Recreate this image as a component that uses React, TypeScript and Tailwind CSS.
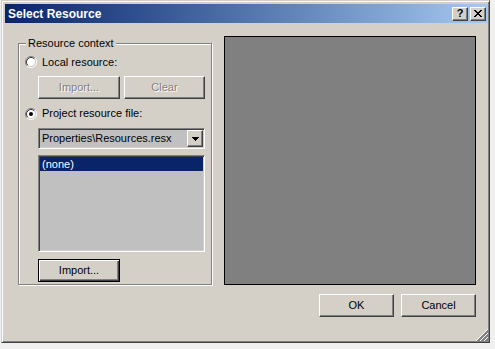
import React from "react";

const raised =
  "bg-[#d4d0c8] border border-t-white border-l-white border-r-[#404040] border-b-[#404040] shadow-[inset_-1px_-1px_#808080]";
const sunken =
  "border border-t-[#808080] border-l-[#808080] border-r-white border-b-white shadow-[inset_1px_1px_#404040,inset_-1px_-1px_#d4d0c8]";

function Radio({ checked }: { checked?: boolean }) {
  return (
    <svg width="12" height="12" viewBox="0 0 12 12" className="shrink-0">
      <circle cx="6" cy="6" r="4.2" fill="#fff" />
      <path d="M2.11 9.89 A5.5 5.5 0 0 1 9.89 2.11" fill="none" stroke="#808080" strokeWidth="1" />
      <path d="M9.89 2.11 A5.5 5.5 0 0 1 2.11 9.89" fill="none" stroke="#fff" strokeWidth="1" />
      <path d="M2.82 9.18 A4.5 4.5 0 0 1 9.18 2.82" fill="none" stroke="#404040" strokeWidth="1" />
      <path d="M9.18 2.82 A4.5 4.5 0 0 1 2.82 9.18" fill="none" stroke="#d4d0c8" strokeWidth="1" />
      {checked && <circle cx="6" cy="6" r="2" fill="#000" />}
    </svg>
  );
}

function Btn({
  children,
  className = "",
  disabled,
  isDefault,
}: {
  children: React.ReactNode;
  className?: string;
  disabled?: boolean;
  isDefault?: boolean;
}) {
  const cls = isDefault
    ? "bg-[#d4d0c8] border border-black shadow-[inset_1px_1px_#fff,inset_-1px_-1px_#404040,inset_-2px_-2px_#808080]"
    : raised;
  return (
    <div className={`${cls} h-[23px] flex items-center justify-center ${className}`}>
      <span className={disabled ? "text-[#808080] [text-shadow:1px_1px_0_#fff]" : "text-black"}>{children}</span>
    </div>
  );
}

export default function App() {
  return (
    <div className="w-[495px] h-[349px] bg-[#f0f0f0] pl-px font-['Liberation_Sans',Arial,sans-serif] text-[11px] leading-[13px] text-black">
      <div className="w-[489px] h-[343px] bg-[#d4d0c8] border border-t-[#d4d0c8] border-l-[#d4d0c8] border-r-[#404040] border-b-[#404040] shadow-[inset_1px_1px_#fff,inset_-1px_-1px_#808080] pt-[3px] pl-[3px] pr-px pb-px flex flex-col">
        {/* Title bar */}
        <div className="h-[19px] shrink-0 bg-gradient-to-r from-[#0a246a] to-[#a6caf0] flex items-center pl-[3px] pr-[2px]">
          <span className="text-white font-bold text-[12px] leading-[14px] flex-1">Select Resource</span>
          <div className="flex gap-[2px]">
            <div className={`${raised} w-[16px] h-[14px] flex items-center justify-center`}>
              <span className="font-bold text-[11px] leading-[11px] text-black">?</span>
            </div>
            <div className={`${raised} w-[16px] h-[14px] flex items-center justify-center`}>
              <svg width="8" height="7" viewBox="0 0 8 7" shapeRendering="crispEdges">
                <path
                  d="M0 0h2v1h-2z M6 0h2v1h-2z M1 1h2v1h-2z M5 1h2v1h-2z M2 2h4v1h-4z M3 3h2v1h-2z M2 4h4v1h-4z M1 5h2v1h-2z M5 5h2v1h-2z M0 6h2v1h-2z M6 6h2v1h-2z"
                  fill="#000"
                />
              </svg>
            </div>
          </div>
        </div>

        {/* Body */}
        <div className="relative flex-1 flex flex-col">
          <div className="flex items-start mt-[13px] ml-[13px]">
            {/* Group box */}
            <div className="relative mt-[7px] w-[194px] h-[242px] border border-[#808080] shadow-[inset_1px_1px_#fff,1px_1px_#fff] flex flex-col">
              <span className="absolute left-[7px] -top-[7px] px-[2px] bg-[#d4d0c8]">Resource context</span>

              <div className="mt-[12px] ml-[6px] h-[12px] flex items-center gap-[5px]">
                <Radio />
                <span>Local resource:</span>
              </div>

              <div className="mt-[8px] ml-[19px] flex gap-[4px]">
                <Btn disabled className="w-[82px]">Import...</Btn>
                <Btn disabled className="w-[81px]">Clear</Btn>
              </div>

              <div className="mt-[8px] ml-[6px] h-[13px] flex items-center gap-[5px]">
                <Radio checked />
                <span>Project resource file:</span>
              </div>

              <div className={`mt-[8px] ml-[19px] w-[167px] h-[21px] bg-[#c0c0c0] ${sunken} p-px flex items-center`}>
                <span className="flex-1 pl-[2px]">Properties\Resources.resx</span>
                <div className={`${raised} w-[16px] h-[17px] flex items-center justify-center`}>
                  <svg width="7" height="4" viewBox="0 0 7 4" shapeRendering="crispEdges">
                    <path d="M0 0h7v1h-7z M1 1h5v1h-5z M2 2h3v1h-3z M3 3h1v1h-1z" fill="#000" />
                  </svg>
                </div>
              </div>

              <div className={`mt-[6px] ml-[19px] w-[167px] h-[97px] bg-[#c0c0c0] ${sunken} p-px`}>
                <div className="h-[14px] bg-[#0a246a] text-white pl-[2px] flex items-center">(none)</div>
              </div>

              <div className="mt-[7px] ml-[19px]">
                <Btn isDefault className="w-[82px]">Import...</Btn>
              </div>
            </div>

            {/* Preview */}
            <div className="ml-[12px] w-[252px] h-[249px] bg-[#808080] border border-black" />
          </div>

          <div className="mt-[9px] flex justify-end gap-[7px] pr-[12px]">
            <Btn className="w-[75px]">OK</Btn>
            <Btn className="w-[75px]">Cancel</Btn>
          </div>

          <svg
            className="absolute right-0 bottom-0"
            width="12"
            height="12"
            viewBox="0 0 12 12"
            shapeRendering="crispEdges"
          >
            {[0, 4, 8].map((k) => (
              <g key={k}>
                <line x1={12} y1={k + 0.5} x2={k + 0.5} y2={12} stroke="#fff" />
                <line x1={12} y1={k + 1.5} x2={k + 1.5} y2={12} stroke="#808080" />
                <line x1={12} y1={k + 2.5} x2={k + 2.5} y2={12} stroke="#808080" />
              </g>
            ))}
          </svg>
        </div>
      </div>
    </div>
  );
}
